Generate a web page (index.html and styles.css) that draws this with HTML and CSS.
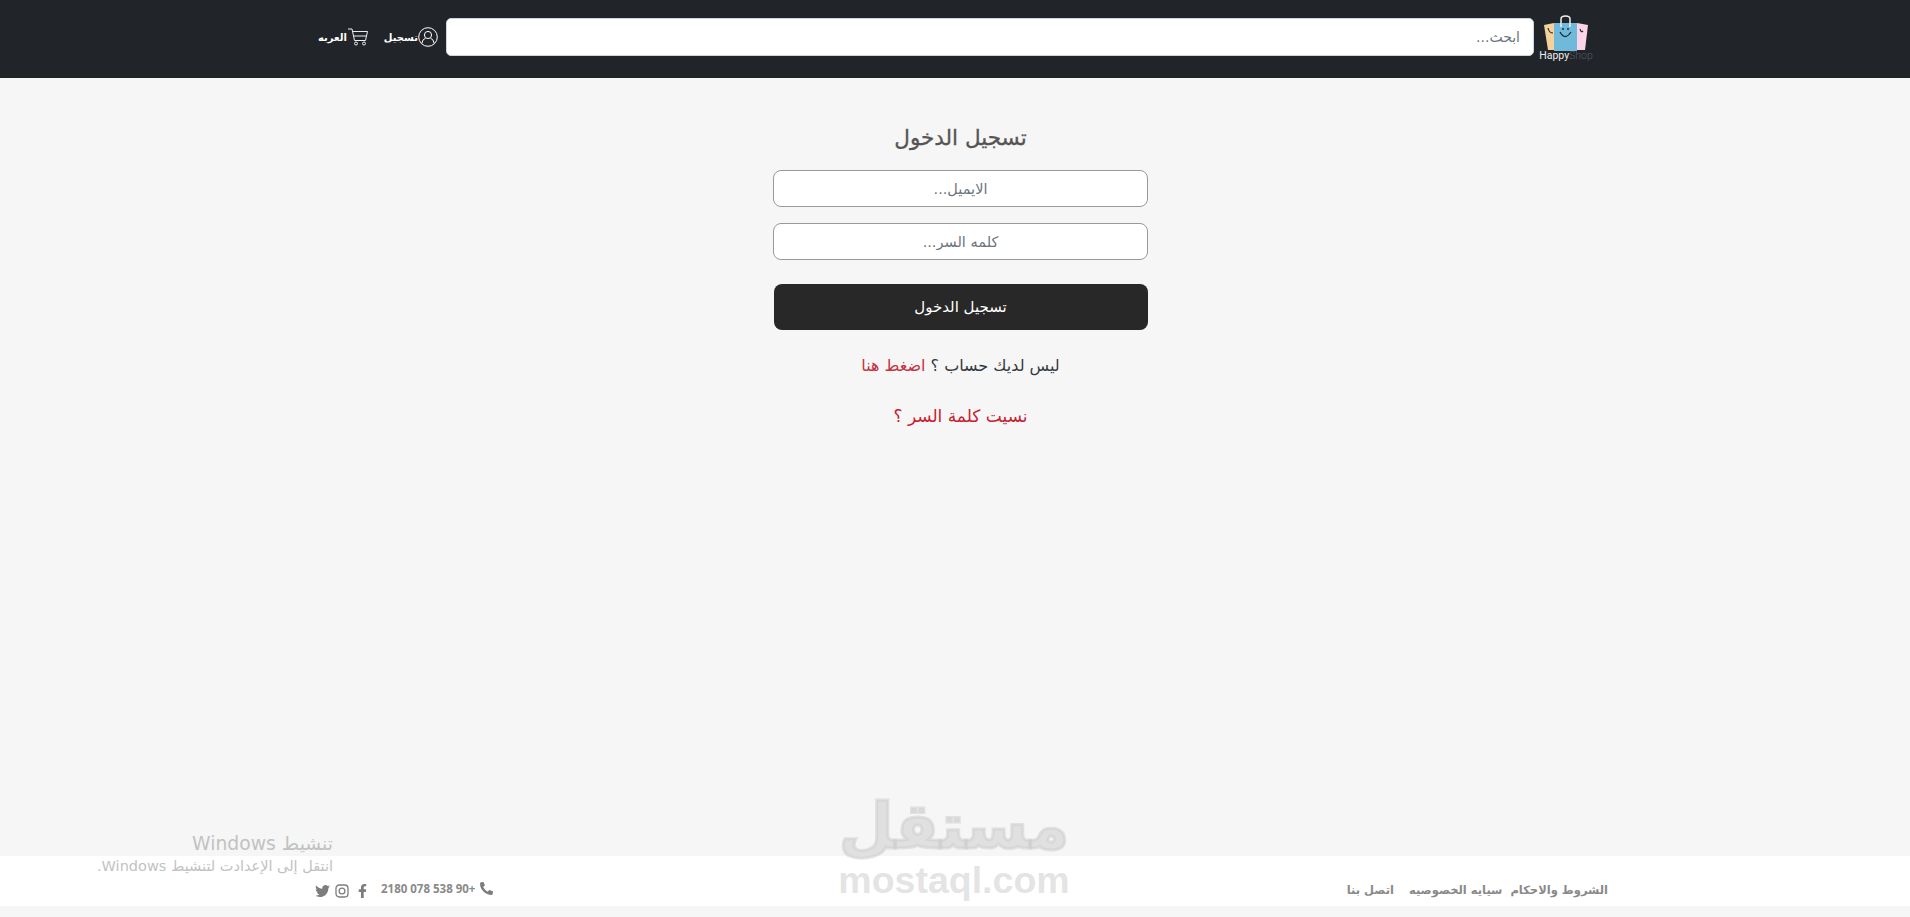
FILE: index.html
```html
<!DOCTYPE html>
<html lang="ar" dir="rtl">
<head>
  <meta charset="UTF-8" />
  <title>HappyShop</title>
  <link rel="stylesheet" href="styles.css">
</head>
<body>
  <header class="topbar">
    <div class="topbar-inner">
      <a class="logo" href="#">
        <svg class="logo-bags" width="46" height="37" viewBox="0 0 46 37">
          <path d="M1 10l10-2v27H5z" fill="#f6d29b"/>
          <path d="M34 8l11 2-3 25h-8z" fill="#fcd6e8"/>
          <rect x="11" y="8" width="23" height="28" fill="#6fbada"/>
          <path d="M18 12V4q0-3 4.500-3T27 4v8" fill="none" stroke="#eee" stroke-width="1.500"/>
          <path d="M17 17q5 9 11 0" fill="none" stroke="#1d2c3c" stroke-width="1.300"/>
          <path d="M5 13q1 5 5 5M37 14q1 4 3 2" fill="none" stroke="#2a2a33" stroke-width="1.200"/>
          <circle cx="20" cy="14" r="1" fill="#1d2c3c"/><circle cx="25" cy="14" r="1" fill="#1d2c3c"/>
        </svg>
        <span class="logo-name" dir="ltr">Happy<span class="logo-shop">Shop</span></span>
      </a>
      <input class="search" type="text" placeholder="ابحث...">
      <a class="top-link signup" href="#">
        <svg width="20" height="20" viewBox="0 0 20 20" fill="none" stroke="#fff" stroke-width="1">
          <circle cx="10" cy="10" r="9.300"/>
          <circle cx="10" cy="8" r="3.600"/>
          <path d="M3.800 16.500q.7-4.500 3.700-5.300M16.200 16.500q-.7-4.500-3.700-5.300"/>
        </svg>
        <span>تسجيل</span>
      </a>
      <a class="top-link cart" href="#">
        <svg width="20" height="18" viewBox="0 0 20 18" fill="none" stroke="#eee" stroke-width="1">
          <path d="M0 1h4l2.500 11.500h11L19.500 3.500H4.600M5.500 8h13"/>
          <circle cx="8" cy="15.500" r="1.500"/><circle cx="16" cy="15.500" r="1.500"/>
        </svg>
        <span>العربه</span>
      </a>
    </div>
  </header>

  <main class="login">
    <h2 class="login-title">تسجيل الدخول</h2>
    <input class="field" type="email" placeholder="الايميل...">
    <input class="field" type="password" placeholder="كلمه السر...">
    <button class="submit">تسجيل الدخول</button>
    <p class="no-account">ليس لديك حساب ؟ <a href="#">اضغط هنا</a></p>
    <a class="forgot" href="#">نسيت كلمة السر ؟</a>
  </main>

  <footer class="footer">
    <nav class="footer-links">
      <a href="#">الشروط والاحكام</a>
      <a href="#">سيايه الخصوصيه</a>
      <a href="#">اتصل بنا</a>
    </nav>
    <div class="footer-contact">
      <svg width="13" height="13" viewBox="0 0 24 24" fill="#7d7d7d"><path d="M23 17l-5-2.200a1.200 1.200 0 0 0-1.400.3l-2.200 2.700A18 18 0 0 1 5.800 9.200l2.700-2.200a1.200 1.200 0 0 0 .3-1.400L6.600.6A1.200 1.200 0 0 0 5.200 0L.9 1A1.200 1.200 0 0 0 0 2.100 21.800 21.800 0 0 0 21.900 24a1.200 1.200 0 0 0 1.100-.9l1-4.300a1.200 1.200 0 0 0-1-1.800z"/></svg>
      <span class="phone" dir="ltr">2180 078 538 90+</span>
      <svg class="social social-f" width="9" height="14" viewBox="0 0 320 512" fill="#7d7d7d"><path d="M279 288l14-93h-89v-60c0-25 12-50 52-50h41V6s-37-6-72-6c-73 0-121 44-121 125v70H23v93h81v224h100V288z"/></svg>
      <svg class="social social-i" width="14" height="14" viewBox="0 0 14 14" fill="none" stroke="#7d7d7d" stroke-width="1.300"><rect x="1" y="1" width="12" height="12" rx="3.200"/><circle cx="7" cy="7" r="2.900"/></svg>
      <svg class="social" width="15" height="12" viewBox="0 0 512 416" fill="#7d7d7d"><path d="M459 104c.3 4.500.3 9 .3 13.500C459 256 353 416 159 416c-60 0-116-17-159-48 8 1 16 1 24 1 49 0 95-17 131-45-46-1-85-31-98-73 7 1 13 2 20 2 10 0 19-1 28-4C57 239 21 197 21 146v-1c14 8 31 13 48 14-28-19-47-51-47-87 0-19 5-37 14-52 52 64 130 106 217 110-2-8-3-16-3-24C250 48 298 0 357 0c31 0 58 13 78 34 24-5 47-14 67-26-8 25-25 46-47 59 21-2 42-8 60-16-14 20-32 39-56 53z"/></svg>
    </div>
  </footer>

  <div class="watermark" aria-hidden="true">
    <span class="watermark-ar">مستقل</span>
    <span class="watermark-en">mostaql.com</span>
  </div>

  <div class="activate">
    <div class="activate-title">تنشيط Windows</div>
    <div class="activate-text">انتقل إلى الإعدادت لتنشيط Windows.</div>
  </div>
</body>
</html>
```

FILE: styles.css
```css
* {
  box-sizing: border-box;
}

html, body {
  height: 100%;
}

body {
  margin: 0;
  height: 917px;
  overflow: hidden;
  position: relative;
  display: flex;
  flex-direction: column;
  background: #f6f6f6;
  font-family: "DejaVu Sans", "Noto Sans", sans-serif;
  color: #333;
}

a {
  text-decoration: none;
  color: inherit;
}

.topbar {
  height: 78px;
  background: #212529;
}

.topbar-inner {
  height: 100%;
  display: flex;
  align-items: center;
  padding: 0 318px 4px 0;
}

.logo {
  width: 52px;
  margin-left: 6px;
  display: flex;
  flex-direction: column;
  align-items: center;
}

.logo-name {
  font-family: "Roboto", sans-serif;
  font-size: 10.500px;
  line-height: 9px;
  margin-top: -1px;
  color: #eee;
}

.logo-shop {
  color: #555a66;
  font-weight: 300;
}

.search {
  flex: none;
  width: 1088px;
  height: 38px;
  padding: 0 13px;
  border: 1px solid #ced4da;
  border-radius: 5px;
  background: #fff;
  font: 14px "DejaVu Sans", sans-serif;
}

.search::placeholder, .field::placeholder {
  color: #6c757d;
}

.top-link {
  display: flex;
  align-items: center;
  flex: none;
  color: #fff;
  font-size: 10px;
  font-weight: bold;
}

.signup {
  margin-right: 8px;
}

.cart {
  margin-right: 16px;
  gap: 1px;
}

.login {
  flex: 1;
  padding-left: 11px;
  display: flex;
  flex-direction: column;
  align-items: center;
}

.login-title {
  margin: 48px 0 0;
  height: 44px;
  font-size: 21.500px;
  line-height: 24px;
  font-weight: normal;
  -webkit-text-stroke: 0.3px #555;
  color: #555;
}

.field {
  width: 375px;
  height: 37px;
  margin-bottom: 16px;
  border: 1px solid #999;
  border-radius: 8px;
  background: #fff;
  text-align: center;
  font: 14.500px "DejaVu Sans", sans-serif;
}

.submit {
  width: 374px;
  height: 46px;
  margin-top: 8px;
  border: none;
  border-radius: 8px;
  background: #282828;
  color: #fff;
  font: 15px "DejaVu Sans", sans-serif;
}

.no-account {
  margin: 26px 0 0;
  font-size: 16px;
  line-height: 20px;
  color: #343a40;
}

.no-account a {
  color: #c8303f;
}

.forgot {
  margin-top: 30px;
  font-size: 17px;
  line-height: 20px;
  color: #c8202f;
}

.footer {
  height: 50px;
  margin-bottom: 11px;
  padding: 22px 302px 0 315px;
  background: #fff;
  display: flex;
  justify-content: space-between;
  font-size: 11.500px;
  font-weight: bold;
  color: #8a8a8a;
}

.footer-links {
  display: flex;
  gap: 8px;
  padding-top: 5px;
}

.footer-links a:last-child {
  margin-right: 7px;
}

.footer-contact {
  display: flex;
  align-items: center;
  height: 20px;
  gap: 5px;
  padding-top: 1px;
}

.phone {
  font-family: "Open Sans", sans-serif;
  font-size: 11.500px;
}

.social {
  margin-top: 4px;
}

.social-f {
  margin-right: 9px;
}

.social-i {
  margin-right: 4px;
}

.watermark {
  position: absolute;
  left: 838px;
  top: 790px;
  width: 232px;
  display: flex;
  flex-direction: column;
  align-items: center;
  color: rgba(205, 205, 205, 0.55);
  font-weight: bold;
  pointer-events: none;
}

.watermark-ar {
  font-size: 63px;
  line-height: 74px;
  -webkit-text-stroke: 3px rgba(205, 205, 205, 0.55);
}

.watermark-en {
  font-family: "Liberation Sans", sans-serif;
  font-size: 37.500px;
  line-height: 32px;
}

.activate {
  position: absolute;
  left: 95px;
  top: 832px;
  width: 238px;
  color: #c2c2c2;
  pointer-events: none;
}

.activate-title {
  font-size: 18.800px;
  line-height: 24px;
}

.activate-text {
  font-size: 14.500px;
  line-height: 21px;
  white-space: nowrap;
}
```
